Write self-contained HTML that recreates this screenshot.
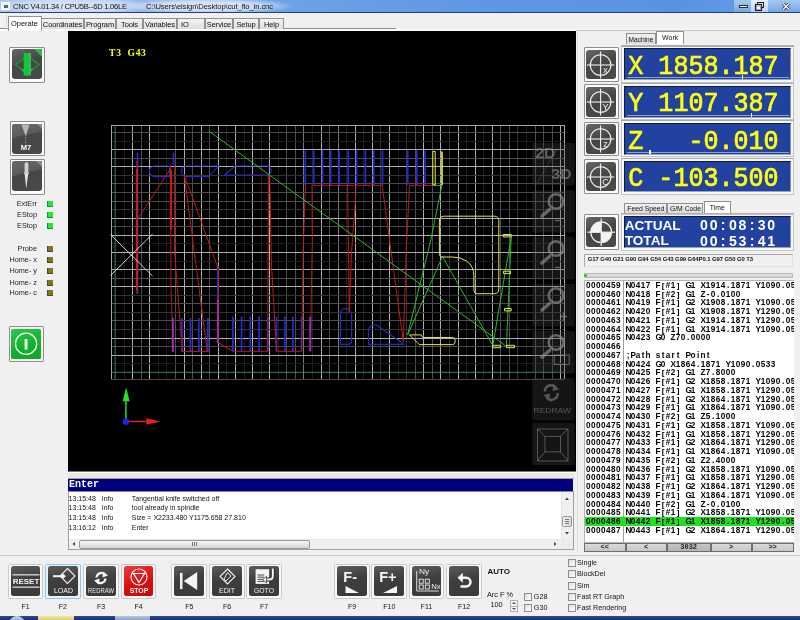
<!DOCTYPE html>
<html><head><meta charset="utf-8">
<style>
*{margin:0;padding:0;box-sizing:border-box}
html,body{width:800px;height:620px;overflow:hidden;will-change:transform;background:#f0f0f0;font-family:"Liberation Sans",sans-serif;color:#000}
.a{position:absolute}
#title{left:0;top:0;width:800px;height:13px;background:linear-gradient(90deg,#b2c8ec 0%,#a4bfea 12%,#8cb2e8 22%,#6ea2e6 36%,#5e97e4 60%,#5893e2 85%,#6aa0e6 100%);border-bottom:1px solid #27406e;overflow:hidden}
.tt{font-size:7.6px;line-height:13px;white-space:nowrap;color:#111;letter-spacing:-0.25px}
.tab{top:17.5px;height:11px;border:1px solid #8e9296;border-bottom:none;background:linear-gradient(#f4f4f4,#dedede);font-size:7.5px;line-height:11px;letter-spacing:-0.1px;text-align:center;white-space:nowrap;color:#111}
.btnf{border:1px solid #8d8d8d;background:#fbfbfb;border-radius:1px}
.btni{border-radius:3px;background:linear-gradient(160deg,#686868,#464646 45%,#4a4a4a 100%)}
.led{width:6px;height:6px}
.lbl{font-size:7.3px;text-align:right;width:37px;left:0;white-space:nowrap;color:#222}
.dro{left:624px;width:167px;height:32px;background:#2242a0;border:1px solid #0d1a3a;border-right-color:#8090b0;border-bottom-color:#9aa6c0}
.drot{font-family:"Liberation Mono",monospace;font-size:25.05px;color:#ffff10;left:3.3px;top:0px;line-height:30px;white-space:pre;margin-top:0.8px;transform:scaleY(1.12);transform-origin:0 0;-webkit-text-stroke:0.65px #ffff10}
.prog{font-family:"Liberation Sans",sans-serif;font-weight:bold;font-size:8.2px;line-height:8.75px;white-space:nowrap;color:#000}.prog i{display:inline-block;width:5px;text-align:center;font-style:normal}.prog .b{transform:scaleY(0.86)}
.fl{font-size:7px;color:#111;text-align:center;width:30px;top:603px}
.cb{width:8px;height:8px;border:1px solid #8e8f8f;background:linear-gradient(135deg,#dcdcdc,#fff)}
.cbl{font-size:7.2px;white-space:nowrap;color:#111}
</style></head>
<body>
<!-- Title bar -->
<div id="title" class="a">
  <div class="a" style="left:0px;top:-3px;width:150px;height:18px;background:radial-gradient(ellipse at center,rgba(255,255,255,.6) 0%,rgba(255,255,255,.4) 50%,rgba(255,255,255,0) 72%)"></div><div class="a" style="left:128px;top:-2px;width:165px;height:16px;background:radial-gradient(ellipse at center,rgba(255,255,255,.8) 0%,rgba(255,255,255,.55) 45%,rgba(255,255,255,0) 72%)"></div>
  <div class="a" style="left:1px;top:2px;width:9px;height:8px;background:#e8eef6;border:1px solid #fff"><div class="a" style="left:1.5px;top:1.5px;width:4px;height:3px;background:#3a7a5a"></div></div>
  <div class="a tt" style="left:13px;top:0">CNC V4.01.34 / CPU5B--6D 1.06LE</div>
  <div class="a tt" style="left:146px;top:0;letter-spacing:-0.08px">C:\Users\elsign\Desktop\cut_flo_in.cnc</div>
  <div class="a" style="left:734px;top:0;width:66px;height:12px;background:linear-gradient(#a8c8f0,#74a8ea)"></div>
  <div class="a" style="left:751px;top:0;width:17px;height:12px;background:linear-gradient(#e8f0fb,#b8d2f4)"></div>
  <div class="a" style="left:739px;top:4.5px;width:9px;height:3.5px;background:#fff;border:1px solid #2a2a2a"></div>
  <svg class="a" style="left:754px;top:1px" width="12" height="11"><rect x="3.5" y="1.5" width="6" height="5" fill="none" stroke="#222" stroke-width="1"/><rect x="1.5" y="3.5" width="6" height="6" fill="#fff" stroke="#222" stroke-width="1.2"/><rect x="2.5" y="5" width="4" height="3.5" fill="#fff" stroke="#666" stroke-width="0.6"/></svg>
  <svg class="a" style="left:779px;top:1px" width="14" height="11"><path d="M4,2.5L10,8.5M10,2.5L4,8.5" stroke="#333" stroke-width="2.8"/><path d="M4,2.5L10,8.5M10,2.5L4,8.5" stroke="#fff" stroke-width="1.3"/></svg>
</div>
<!-- Tab strip -->
<div class="a" style="left:0;top:29.2px;width:800px;height:1.8px;background:#fafafa"></div><div class="a" style="left:0;top:28px;width:396px;height:1.2px;background:#8c8c8c"></div>
<div class="a" style="left:6px;top:15px;width:1px;height:15px;background:#d8d8d8"></div>
<div class="a" style="left:7.5px;top:15.5px;width:34px;height:15px;background:#fff;border:1px solid #8e9296;border-bottom:none;font-size:7.5px;line-height:14px;text-align:center;color:#111">Operate</div>
<div class="a tab" style="left:41px;width:43px">Coordinates</div>
<div class="a tab" style="left:84px;width:32px">Program</div>
<div class="a tab" style="left:116px;width:27px">Tools</div>
<div class="a tab" style="left:143px;width:34px">Variables</div>
<div class="a tab" style="left:177px;width:28px;text-align:left;padding-left:3px">IO</div>
<div class="a tab" style="left:205px;width:28px">Service</div>
<div class="a tab" style="left:233px;width:26px">Setup</div>
<div class="a tab" style="left:259px;width:25px">Help</div>

<!-- LEFT PANEL -->
<div id="left">
<div class="a btnf" style="left:9px;top:47px;width:36px;height:35.5px"></div>
<div class="a btni" style="left:12px;top:49px;width:30px;height:30px"></div>
<svg class="a" style="left:12px;top:49px" width="30" height="30" viewBox="0 0 30 30">
  <polygon points="22,0 30,0 30,8" fill="#22c040"/>
  <polygon points="15,6.5 27,15.5 15,24.5 3.5,15.5" fill="none" stroke="#1a9a38" stroke-width="1.9" opacity="0.75"/>
  <rect x="11.7" y="4" width="7.3" height="22.5" fill="#11c938"/>
  <polygon points="9,20 21.5,20 15,27" fill="#11c938"/>
  <line x1="18" y1="4" x2="18" y2="25" stroke="#b080c0" stroke-width="0.7"/>
</svg>
<div class="a btnf" style="left:9.5px;top:121px;width:35px;height:35px"></div>
<div class="a btni" style="left:12px;top:123.5px;width:30px;height:30px"></div>
<svg class="a" style="left:12px;top:123.5px" width="30" height="30" viewBox="0 0 30 30">
  <path d="M1.5,0 H28.5 Q30,0 30,1.5 V8 Q18,9 0,14 V1.5 Q0,0 1.5,0Z" fill="#6a6a6a" opacity="0.55"/>
  <polygon points="9.5,0.5 17.5,0.5 13.8,12.5" fill="#b8c8d8" opacity="0.85"/>
  <path d="M13.6,13v6" stroke="#8a9ab0" stroke-width="1" stroke-dasharray="1.2 1.2"/>
  <polygon points="25,0 30,0 30,5" fill="#8a8a8a"/>
  <text x="14" y="26" font-family="Liberation Sans" font-weight="bold" font-size="7.6" fill="#fff" text-anchor="middle">M7</text>
</svg>
<div class="a btnf" style="left:9.5px;top:159px;width:35px;height:35.5px"></div>
<div class="a btni" style="left:12px;top:161px;width:30px;height:30px"></div>
<svg class="a" style="left:12px;top:161px" width="30" height="30" viewBox="0 0 30 30">
  <path d="M1.5,0 H28.5 Q30,0 30,1.5 V8.5 Q18,10 0,15.5 V1.5 Q0,0 1.5,0Z" fill="#6a6a6a" opacity="0.55"/>
  <polygon points="24,0 30,0 30,6" fill="#8a8a8a"/>
  <rect x="12.6" y="1.3" width="3.8" height="10.5" rx="1.6" fill="#d0d0d0"/>
  <rect x="12" y="11.5" width="5" height="1.3" fill="#f0f0f0"/>
  <polygon points="12.6,12.8 16.2,12.8 14.3,27.5" fill="#e4e4e4"/>
</svg>
<div class="a lbl" style="top:199.3px;line-height:10px">ExtErr</div><div class="a led" style="left:47px;top:201.3px;background:#22e83a;box-shadow:inset 1px -1px 0 #0b9a1b"></div>
<div class="a lbl" style="top:210.3px;line-height:10px">EStop</div><div class="a led" style="left:47px;top:212.3px;background:#22e83a;box-shadow:inset 1px -1px 0 #0b9a1b"></div>
<div class="a lbl" style="top:221.4px;line-height:10px">EStop</div><div class="a led" style="left:47px;top:223.4px;background:#22e83a;box-shadow:inset 1px -1px 0 #0b9a1b"></div>
<div class="a lbl" style="top:244.2px;line-height:10px">Probe</div><div class="a led" style="left:47px;top:246.2px;background:#807624;box-shadow:inset 1px -1px 0 #4f4a18"></div>
<div class="a lbl" style="top:255.3px;line-height:10px">Home- x</div><div class="a led" style="left:47px;top:257.3px;background:#807624;box-shadow:inset 1px -1px 0 #4f4a18"></div>
<div class="a lbl" style="top:266.3px;line-height:10px">Home- y</div><div class="a led" style="left:47px;top:268.3px;background:#807624;box-shadow:inset 1px -1px 0 #4f4a18"></div>
<div class="a lbl" style="top:277.6px;line-height:10px">Home- z</div><div class="a led" style="left:47px;top:279.6px;background:#807624;box-shadow:inset 1px -1px 0 #4f4a18"></div>
<div class="a lbl" style="top:288.3px;line-height:10px">Home- c</div><div class="a led" style="left:47px;top:290.3px;background:#807624;box-shadow:inset 1px -1px 0 #4f4a18"></div>

<div class="a btnf" style="left:8.5px;top:326px;width:35px;height:35.5px"></div>
<div class="a" style="left:10.6px;top:328.6px;width:30.2px;height:30.4px;background:linear-gradient(160deg,#2dc84a,#10b02a 60%,#12a82a);border-radius:1.5px"></div>
<svg class="a" style="left:10.6px;top:328.6px" width="31" height="31" viewBox="0 0 31 31">
  <circle cx="15.1" cy="14.8" r="10.6" fill="none" stroke="#f4fff4" stroke-width="1.3"/>
  <rect x="13.6" y="10" width="2.9" height="10.6" fill="#f4fff4"/>
</svg>
</div>

<!-- GRAPHIC -->
<div id="gfx"><svg class="a" style="left:67.5px;top:31px" width="508.5" height="440.5" viewBox="67.5 31 508.5 440.5">
<rect x="67.5" y="31" width="508.5" height="440.5" fill="#000"/>
<path d="M123.5,125.3V379.2" stroke="#1e1e1e" stroke-width="1" shape-rendering="crispEdges"/>
<path d="M131.5,125.3V379.2" stroke="#aeaeae" stroke-width="1" shape-rendering="crispEdges"/>
<path d="M140.5,125.3V379.2" stroke="#4d4d4d" stroke-width="1" shape-rendering="crispEdges"/>
<path d="M148.5,125.3V379.2" stroke="#aeaeae" stroke-width="1" shape-rendering="crispEdges"/>
<path d="M157.5,125.3V379.2" stroke="#1e1e1e" stroke-width="1" shape-rendering="crispEdges"/>
<path d="M165.5,125.3V379.2" stroke="#1e1e1e" stroke-width="1" shape-rendering="crispEdges"/>
<path d="M174.5,125.3V379.2" stroke="#4d4d4d" stroke-width="1" shape-rendering="crispEdges"/>
<path d="M183.5,125.3V379.2" stroke="#aeaeae" stroke-width="1" shape-rendering="crispEdges"/>
<path d="M191.5,125.3V379.2" stroke="#4d4d4d" stroke-width="1" shape-rendering="crispEdges"/>
<path d="M200.5,125.3V379.2" stroke="#aeaeae" stroke-width="1" shape-rendering="crispEdges"/>
<path d="M208.5,125.3V379.2" stroke="#4d4d4d" stroke-width="1" shape-rendering="crispEdges"/>
<path d="M217.5,125.3V379.2" stroke="#aeaeae" stroke-width="1" shape-rendering="crispEdges"/>
<path d="M225.5,125.3V379.2" stroke="#1e1e1e" stroke-width="1" shape-rendering="crispEdges"/>
<path d="M234.5,125.3V379.2" stroke="#aeaeae" stroke-width="1" shape-rendering="crispEdges"/>
<path d="M243.5,125.3V379.2" stroke="#1e1e1e" stroke-width="1" shape-rendering="crispEdges"/>
<path d="M251.5,125.3V379.2" stroke="#aeaeae" stroke-width="1" shape-rendering="crispEdges"/>
<path d="M260.5,125.3V379.2" stroke="#1e1e1e" stroke-width="1" shape-rendering="crispEdges"/>
<path d="M268.5,125.3V379.2" stroke="#aeaeae" stroke-width="1" shape-rendering="crispEdges"/>
<path d="M277.5,125.3V379.2" stroke="#1e1e1e" stroke-width="1" shape-rendering="crispEdges"/>
<path d="M285.5,125.3V379.2" stroke="#4d4d4d" stroke-width="1" shape-rendering="crispEdges"/>
<path d="M294.5,125.3V379.2" stroke="#4d4d4d" stroke-width="1" shape-rendering="crispEdges"/>
<path d="M302.5,125.3V379.2" stroke="#777777" stroke-width="1" shape-rendering="crispEdges"/>
<path d="M311.5,125.3V379.2" stroke="#1e1e1e" stroke-width="1" shape-rendering="crispEdges"/>
<path d="M320.5,125.3V379.2" stroke="#aeaeae" stroke-width="1" shape-rendering="crispEdges"/>
<path d="M328.5,125.3V379.2" stroke="#4d4d4d" stroke-width="1" shape-rendering="crispEdges"/>
<path d="M337.5,125.3V379.2" stroke="#777777" stroke-width="1" shape-rendering="crispEdges"/>
<path d="M345.5,125.3V379.2" stroke="#1e1e1e" stroke-width="1" shape-rendering="crispEdges"/>
<path d="M354.5,125.3V379.2" stroke="#aeaeae" stroke-width="1" shape-rendering="crispEdges"/>
<path d="M362.5,125.3V379.2" stroke="#1e1e1e" stroke-width="1" shape-rendering="crispEdges"/>
<path d="M371.5,125.3V379.2" stroke="#aeaeae" stroke-width="1" shape-rendering="crispEdges"/>
<path d="M379.5,125.3V379.2" stroke="#333333" stroke-width="1" shape-rendering="crispEdges"/>
<path d="M388.5,125.3V379.2" stroke="#aeaeae" stroke-width="1" shape-rendering="crispEdges"/>
<path d="M397.5,125.3V379.2" stroke="#1e1e1e" stroke-width="1" shape-rendering="crispEdges"/>
<path d="M405.5,125.3V379.2" stroke="#333333" stroke-width="1" shape-rendering="crispEdges"/>
<path d="M414.5,125.3V379.2" stroke="#4d4d4d" stroke-width="1" shape-rendering="crispEdges"/>
<path d="M422.5,125.3V379.2" stroke="#aeaeae" stroke-width="1" shape-rendering="crispEdges"/>
<path d="M431.5,125.3V379.2" stroke="#4d4d4d" stroke-width="1" shape-rendering="crispEdges"/>
<path d="M439.5,125.3V379.2" stroke="#aeaeae" stroke-width="1" shape-rendering="crispEdges"/>
<path d="M448.5,125.3V379.2" stroke="#333333" stroke-width="1" shape-rendering="crispEdges"/>
<path d="M457.5,125.3V379.2" stroke="#aeaeae" stroke-width="1" shape-rendering="crispEdges"/>
<path d="M465.5,125.3V379.2" stroke="#1e1e1e" stroke-width="1" shape-rendering="crispEdges"/>
<path d="M474.5,125.3V379.2" stroke="#aeaeae" stroke-width="1" shape-rendering="crispEdges"/>
<path d="M482.5,125.3V379.2" stroke="#1e1e1e" stroke-width="1" shape-rendering="crispEdges"/>
<path d="M491.5,125.3V379.2" stroke="#aeaeae" stroke-width="1" shape-rendering="crispEdges"/>
<path d="M499.5,125.3V379.2" stroke="#4d4d4d" stroke-width="1" shape-rendering="crispEdges"/>
<path d="M508.5,125.3V379.2" stroke="#4d4d4d" stroke-width="1" shape-rendering="crispEdges"/>
<path d="M516.5,125.3V379.2" stroke="#333333" stroke-width="1" shape-rendering="crispEdges"/>
<path d="M525.5,125.3V379.2" stroke="#1e1e1e" stroke-width="1" shape-rendering="crispEdges"/>
<path d="M534.5,125.3V379.2" stroke="#4d4d4d" stroke-width="1" shape-rendering="crispEdges"/>
<path d="M542.5,125.3V379.2" stroke="#4d4d4d" stroke-width="1" shape-rendering="crispEdges"/>
<path d="M551.5,125.3V379.2" stroke="#4d4d4d" stroke-width="1" shape-rendering="crispEdges"/>
<path d="M559.5,125.3V379.2" stroke="#aeaeae" stroke-width="1" shape-rendering="crispEdges"/>
<path d="M110.5,363.5H563.5" stroke="#1e1e1e" stroke-width="1" shape-rendering="crispEdges"/>
<path d="M110.5,355.5H563.5" stroke="#aeaeae" stroke-width="1" shape-rendering="crispEdges"/>
<path d="M110.5,346.5H563.5" stroke="#4d4d4d" stroke-width="1" shape-rendering="crispEdges"/>
<path d="M110.5,338.5H563.5" stroke="#aeaeae" stroke-width="1" shape-rendering="crispEdges"/>
<path d="M110.5,329.5H563.5" stroke="#333333" stroke-width="1" shape-rendering="crispEdges"/>
<path d="M110.5,320.5H563.5" stroke="#4d4d4d" stroke-width="1" shape-rendering="crispEdges"/>
<path d="M110.5,312.5H563.5" stroke="#333333" stroke-width="1" shape-rendering="crispEdges"/>
<path d="M110.5,303.5H563.5" stroke="#4d4d4d" stroke-width="1" shape-rendering="crispEdges"/>
<path d="M110.5,295.5H563.5" stroke="#333333" stroke-width="1" shape-rendering="crispEdges"/>
<path d="M110.5,286.5H563.5" stroke="#aeaeae" stroke-width="1" shape-rendering="crispEdges"/>
<path d="M110.5,278.5H563.5" stroke="#4d4d4d" stroke-width="1" shape-rendering="crispEdges"/>
<path d="M110.5,269.5H563.5" stroke="#aeaeae" stroke-width="1" shape-rendering="crispEdges"/>
<path d="M110.5,261.5H563.5" stroke="#1e1e1e" stroke-width="1" shape-rendering="crispEdges"/>
<path d="M110.5,252.5H563.5" stroke="#aeaeae" stroke-width="1" shape-rendering="crispEdges"/>
<path d="M110.5,243.5H563.5" stroke="#1e1e1e" stroke-width="1" shape-rendering="crispEdges"/>
<path d="M110.5,235.5H563.5" stroke="#aeaeae" stroke-width="1" shape-rendering="crispEdges"/>
<path d="M110.5,226.5H563.5" stroke="#4d4d4d" stroke-width="1" shape-rendering="crispEdges"/>
<path d="M110.5,218.5H563.5" stroke="#aeaeae" stroke-width="1" shape-rendering="crispEdges"/>
<path d="M110.5,209.5H563.5" stroke="#333333" stroke-width="1" shape-rendering="crispEdges"/>
<path d="M110.5,201.5H563.5" stroke="#4d4d4d" stroke-width="1" shape-rendering="crispEdges"/>
<path d="M110.5,192.5H563.5" stroke="#4d4d4d" stroke-width="1" shape-rendering="crispEdges"/>
<path d="M110.5,183.5H563.5" stroke="#4d4d4d" stroke-width="1" shape-rendering="crispEdges"/>
<path d="M110.5,175.5H563.5" stroke="#333333" stroke-width="1" shape-rendering="crispEdges"/>
<path d="M110.5,166.5H563.5" stroke="#aeaeae" stroke-width="1" shape-rendering="crispEdges"/>
<path d="M110.5,158.5H563.5" stroke="#4d4d4d" stroke-width="1" shape-rendering="crispEdges"/>
<path d="M110.5,149.5H563.5" stroke="#aeaeae" stroke-width="1" shape-rendering="crispEdges"/>
<path d="M110.5,141.5H563.5" stroke="#1e1e1e" stroke-width="1" shape-rendering="crispEdges"/>
<path d="M110.5,132.5H563.5" stroke="#4d4d4d" stroke-width="1" shape-rendering="crispEdges"/>
<path d="M110.5,125.5H563.5M110.5,125.3V379.2M563.5,125.3V379.2" stroke="#a7a7a7" stroke-width="1" fill="none" shape-rendering="crispEdges"/>
<path d="M110.5,379.5H563.5" stroke="#484848" stroke-width="1" fill="none" shape-rendering="crispEdges"/>
<path d="M114.6,125.3V379.2M110.5,372.3H563.5" stroke="#2e9474" stroke-width="0.9" fill="none"/>
<path d="M137,152.4V294M173,152.4V165M304.8,150.4V185M313.2,150.4V185M322,150.4V185M330.2,150.4V185M338.6,150.4V185M347.7,150.4V185M356,150.4V185M364.9,150.4V185M373.2,150.4V185M382,150.4V185M407.2,150.4V185M416.3,150.4V185M424.6,150.4V185M172.3,318V352M181.4,318V352M190,318V352M198.3,318V352M207.4,318V352M232.4,316.4V351.3M241.1,316.4V351.3M249.8,316.4V351.3M258.5,316.4V351.3M267.3,316.4V351.3M276,316.4V351.3M284.3,316.4V351.3M292.4,316.4V351.3M301.1,316.4V351.3M309.8,316.4V351.3M217.3,266V343" stroke="#2828dc" stroke-width="1.7" fill="none"/>
<path d="M154,166H169V176.6H154A5.3,5.3 0 0 1 154,166ZM186,166H218L208,176.6H186A5.3,5.3 0 0 1 186,166ZM235,166H266.5A4.5,4.5 0 0 1 266.5,175H224Z" stroke="#2828c8" stroke-width="1.05" fill="none" stroke-linejoin="round"/>
<path d="M340,344.4V313A4.3,4.3 0 0 1 344.3,308.7H347L351,313V341A3.4,3.4 0 0 1 347.6,344.4Z M368,344.4V330A5,5 0 0 1 373,325H376L403.8,344.4Z" stroke="#2626c0" stroke-width="1.2" fill="none" stroke-linejoin="round"/>
<path d="M136.5,161V294M169,170.3L137.5,218.6M170,165L170.5,288.6L172.8,350.7M174.2,165L174,250L181.8,351.4H207.8M183.7,174.5L206.7,351M183.7,174.5L218,269.4V342.8L232.4,351.3H267.3M267.9,175L267.3,351.3M269.2,176L271,265L276,351.3H301.1M305,185L303,240L301.1,351.3M311.5,185L311.8,240L309.8,351.3M313,185.4H381.6M409,185.4H432M347,185L348,250L348.7,312.5M355.4,185L355,200L351.2,250L348.7,312.5M381.6,185L402.8,341.5M409,185L405.8,250L402.8,341.5" stroke="#c41a1a" stroke-width="0.95" fill="none" stroke-linejoin="round"/>
<path d="M136.5,169V290M170.5,170V230" stroke="#d81a1a" stroke-width="1.8" fill="none"/>
<path d="M172.3,318V352M217.3,300V343M309.8,317V351.3" stroke="#a82aa8" stroke-width="1.8" fill="none"/>
<path d="M208.2,131L506,346.5 M441.4,185L430.3,240L407.1,334.9 M442,256.5L407.1,334.9 M442,256.5L492.3,345.5 M510.7,237L492.3,345.5 M510.7,237L505.9,346.5 M433,185.4H441.4" stroke="#2cc02c" stroke-width="0.95" fill="none"/>
<path d="M432.3,151.5V185H434.7V151.5ZM438.9,221Q438.9,216.2 443.7,216.2H494Q498.3,216.2 498.3,220.5V289Q498.3,293.7 494,293.7H477Q473.4,293.7 473.4,290V276Q473.4,266 466,261Q460,257 452,257H441.4Q438.9,256.5 438.9,254.7ZM409,334.9H420.7L422,337.5H452Q454.6,337.5 454.6,340V342Q454.6,344.6 452,344.6H418.7ZM502.7,234.5H510.7V236.89999999999998H502.7ZM503,271.2H510V273.59999999999997H503ZM504,308.5H510.7V310.9H504ZM492,345.3H500V347.7H492ZM506,345.3H514V347.7H506Z" stroke="#e4e44a" stroke-width="1" fill="none"/>
<path d="M441.5,151.5V185" stroke="#f0f040" stroke-width="1.6" fill="none"/>
<path d="M110,234.5L152,276M110,275.5L152,234" stroke="#e8e8e8" stroke-width="0.9" fill="none"/>
<text x="108.6" y="56.3" font-family="Liberation Serif" font-weight="bold" font-size="9.6" fill="#ffff20" textLength="36.8" lengthAdjust="spacing" xml:space="preserve">T3  G43</text>
<path d="M125.4,421.7V400" stroke="#22e822" stroke-width="1.5"/><polygon points="125.6,387.5 122.2,401.3 129.2,401.3" fill="#22e822"/>
<path d="M125.4,421.5H146" stroke="#ee1c1c" stroke-width="1.5"/><polygon points="160,421.5 145.8,418.2 145.8,424.8" fill="#ee1c1c"/>
<circle cx="125.4" cy="421.7" r="3.3" fill="#2020f0"/>
<rect x="531.7" y="143" width="42.5" height="42.5" rx="2" fill="#444" opacity="0.3"/>
<rect x="531.7" y="190" width="42.5" height="42.5" rx="2" fill="#444" opacity="0.3"/>
<rect x="531.7" y="237" width="42.5" height="42.5" rx="2" fill="#444" opacity="0.3"/>
<rect x="531.7" y="284" width="42.5" height="42.5" rx="2" fill="#444" opacity="0.3"/>
<rect x="531.7" y="331" width="42.5" height="42.5" rx="2" fill="#444" opacity="0.3"/>
<rect x="531.7" y="378" width="42.5" height="42.5" rx="2" fill="#444" opacity="0.3"/>
<rect x="531.7" y="422.6" width="42.5" height="42.5" rx="2" fill="#444" opacity="0.3"/>
<g opacity="0.62"><text x="534.8" y="157.8" font-family="Liberation Sans" font-weight="bold" font-size="15.5" fill="#8c8c8c" textLength="20" lengthAdjust="spacingAndGlyphs">2D</text>
<text x="551" y="179.3" font-family="Liberation Sans" font-weight="bold" font-size="15.5" fill="#8c8c8c" textLength="20" lengthAdjust="spacingAndGlyphs">3D</text>
<path d="M557,148L537,183" stroke="#8c8c8c" stroke-width="1" opacity="0.45"/></g>
<g opacity="0.68"><circle cx="555.5" cy="201.5" r="7.3" fill="none" stroke="#8c8c8c" stroke-width="2.6"/>
<path d="M549.0,209.5L541.5,216.0" stroke="#8c8c8c" stroke-width="3.6" stroke-linecap="round"/>
<path d="M554.5,220.5h5" stroke="#8c8c8c" stroke-width="1.3"/>
</g>
<g opacity="0.68"><circle cx="555.5" cy="248.5" r="7.3" fill="none" stroke="#8c8c8c" stroke-width="2.6"/>
<path d="M549.0,256.5L541.5,263.0" stroke="#8c8c8c" stroke-width="3.6" stroke-linecap="round"/>
<path d="M554.5,267.5h5" stroke="#8c8c8c" stroke-width="1.3"/>
</g>
<g opacity="0.68"><circle cx="555.5" cy="295.5" r="7.3" fill="none" stroke="#8c8c8c" stroke-width="2.6"/>
<path d="M549.0,303.5L541.5,310.0" stroke="#8c8c8c" stroke-width="3.6" stroke-linecap="round"/>
<path d="M559.5,316.5h7M563.0,313.0v7" stroke="#8c8c8c" stroke-width="1.3"/>
</g>
<g opacity="0.68"><circle cx="555.5" cy="342.5" r="7.3" fill="none" stroke="#8c8c8c" stroke-width="2.6"/>
<path d="M549.0,350.5L541.5,357.0" stroke="#8c8c8c" stroke-width="3.6" stroke-linecap="round"/>
<rect x="553.7" y="355" width="15" height="9.5" fill="none" stroke="#8c8c8c" stroke-width="1"/>
</g>
<g opacity="0.55"><path d="M544.5,391.5 A6,6 0 0 1 555.5,388" stroke="#8c8c8c" stroke-width="2.6" fill="none"/><polygon points="553,384 558.5,389.5 552,391" fill="#8c8c8c"/>
<path d="M557,393 A6,6 0 0 1 546,397" stroke="#8c8c8c" stroke-width="2.6" fill="none"/><polygon points="548.5,400.5 543,395 549.5,393.5" fill="#8c8c8c"/>
<text x="533" y="413.3" font-family="Liberation Sans" font-size="8" fill="#8c8c8c" textLength="37.5" lengthAdjust="spacingAndGlyphs">REDRAW</text></g>
<path d="M537,429h30.5v32h-30.5zM544.5,436.4h15.5v15.4h-15.5zM537,429l7.5,7.4M567.5,429l-7.5,7.4M537,461l7.5,-9.2M567.5,461l-7.5,-9.2" stroke="#8c8c8c" stroke-width="1" fill="none" opacity="0.55"/>
</svg></div>

<!-- LOG -->
<div class="a" style="left:67.5px;top:471.5px;width:508.5px;height:1.5px;background:#fff"></div>
<div class="a" style="left:67.5px;top:473px;width:506px;height:4.5px;background:#ebe8dc"></div>
<div class="a" style="left:67.5px;top:477.5px;width:506px;height:1px;background:#a0a0a0"></div>
<div class="a" style="left:67.8px;top:478.5px;width:505.5px;height:12px;background:#000080"></div>
<div class="a" style="left:69px;top:478.5px;font-family:'Liberation Mono',monospace;font-weight:bold;font-size:10px;line-height:12px;color:#fff">Enter</div>

<div class="a" style="left:67.8px;top:491px;width:506px;height:59px;border:1px solid #a0a0a0;border-top-color:#828790;background:#fff"></div>
<div class="a" style="left:68.6px;top:493.5px;font-size:7px;line-height:10px;white-space:nowrap;color:#111">13:15:48</div>
<div class="a" style="left:101.8px;top:493.5px;font-size:7px;line-height:10px;white-space:nowrap;color:#111">Info</div>
<div class="a" style="left:131.8px;top:493.5px;font-size:7px;line-height:10px;white-space:nowrap;color:#111">Tangential knife switched off</div>
<div class="a" style="left:68.6px;top:503.3px;font-size:7px;line-height:10px;white-space:nowrap;color:#111">13:15:48</div>
<div class="a" style="left:101.8px;top:503.3px;font-size:7px;line-height:10px;white-space:nowrap;color:#111">Info</div>
<div class="a" style="left:131.8px;top:503.3px;font-size:7px;line-height:10px;white-space:nowrap;color:#111">tool already in spindle</div>
<div class="a" style="left:68.6px;top:513.1px;font-size:7px;line-height:10px;white-space:nowrap;color:#111">13:15:48</div>
<div class="a" style="left:101.8px;top:513.1px;font-size:7px;line-height:10px;white-space:nowrap;color:#111">Info</div>
<div class="a" style="left:131.8px;top:513.1px;font-size:7px;line-height:10px;white-space:nowrap;color:#111">Size = X2233.480 Y1175.658 27.810</div>
<div class="a" style="left:68.6px;top:522.9px;font-size:7px;line-height:10px;white-space:nowrap;color:#111">13:16:12</div>
<div class="a" style="left:101.8px;top:522.9px;font-size:7px;line-height:10px;white-space:nowrap;color:#111">Info</div>
<div class="a" style="left:131.8px;top:522.9px;font-size:7px;line-height:10px;white-space:nowrap;color:#111">Enter</div>
<div class="a" style="left:561px;top:492px;width:12px;height:47px;background:#f0f0f0;border-left:1px solid #e6e6e6"></div>
<svg class="a" style="left:561px;top:492px" width="12" height="47"><polygon points="4,8 6,5.5 8,8" fill="#444"/><polygon points="4,40 6,42.5 8,40" fill="#444"/></svg>
<div class="a" style="left:562px;top:515.5px;width:10px;height:11.5px;border:1px solid #999;border-radius:2px;background:linear-gradient(90deg,#f4f4f4,#d8d8d8)"></div>
<div class="a" style="left:565px;top:519px;width:4px;height:4.5px;border-top:1px solid #777;border-bottom:1px solid #777"></div><div class="a" style="left:565px;top:521px;width:4px;height:1px;background:#777"></div>
<div class="a" style="left:68.8px;top:539px;width:492px;height:10px;background:#f0f0f0;border-top:1px solid #e6e6e6"></div><div class="a" style="left:561px;top:539px;width:12px;height:10px;background:#ececec"></div>
<svg class="a" style="left:68.8px;top:539px" width="492" height="10"><polygon points="6,5 3.5,3 3.5,7" fill="#444" transform="rotate(180 4.75 5)"/><polygon points="485,3 487.5,5 485,7" fill="#444"/></svg>
<div class="a" style="left:79.3px;top:539.5px;width:231px;height:9px;border:1px solid #999;border-radius:2px;background:linear-gradient(#f6f6f6,#d6d6d6)"></div>
<div class="a" style="left:192px;top:541.5px;width:5px;height:4px;border-left:1px solid #777;border-right:1px solid #777"></div><div class="a" style="left:194px;top:541.5px;width:1px;height:4px;background:#777"></div>
<!-- RIGHT PANEL -->
<div id="right"><div class="a" style="left:576.5px;top:30.5px;width:1px;height:521px;background:#dcdcdc"></div><div class="a" style="left:576px;top:30.3px;width:224px;height:1px;background:#c4c4c4"></div>
<div class="a" style="left:625.7px;top:32.6px;width:30.5px;height:11.5px;border:1px solid #8e9296;border-bottom:none;background:linear-gradient(#f2f2f2,#d9d9d9);font-size:6.6px;line-height:11px;text-align:center;color:#111">Machine</div>
<div class="a" style="left:656px;top:31.4px;width:28.3px;height:13px;border:1px solid #8e9296;border-bottom:none;background:#fff;font-size:7px;line-height:11px;text-align:center;color:#111">Work</div>
<div class="a" style="left:621px;top:44.5px;width:173px;height:1px;background:#b0b0b0"></div>
<div class="a btnf" style="left:583.5px;top:47.2px;width:35px;height:34.8px"></div>
<div class="a btni" style="left:585.8px;top:49.7px;width:30.4px;height:29.8px"></div>
<svg class="a" style="left:585px;top:49.6px" width="32" height="30" viewBox="0 0 32 30">
<circle cx="15.6" cy="15" r="10.3" fill="none" stroke="#f2f2f2" stroke-width="1.1"/>
<line x1="1.8" y1="15" x2="29.2" y2="15" stroke="#f2f2f2" stroke-width="1.1"/>
<line x1="15.6" y1="1.6" x2="15.6" y2="28.4" stroke="#f2f2f2" stroke-width="1.1"/>
<text x="20.5" y="22.8" font-family="Liberation Sans" font-size="9" fill="#f0f0f0" text-anchor="middle">x</text>
</svg>
<div class="a" style="left:621px;top:45.7px;width:173px;height:37.3px;border:1px solid #c4c4c4;border-top-color:#a8a8a8;background:#f7f7f7"></div>
<div class="a dro" style="top:48.4px;height:32.1px"><div class="a drot">X 1858.187</div><div class="a" style="left:2px;top:27.6px;width:162px;height:1px;background:#8ea0cc"></div><div class="a" style="left:116.6px;top:25.6px;width:1.5px;height:4px;background:#fff"></div></div>
<div class="a btnf" style="left:583.5px;top:84.3px;width:35px;height:35.2px"></div>
<div class="a btni" style="left:585.8px;top:86.8px;width:30.4px;height:30.2px"></div>
<svg class="a" style="left:585px;top:86.9px" width="32" height="30" viewBox="0 0 32 30">
<circle cx="15.6" cy="15" r="10.3" fill="none" stroke="#f2f2f2" stroke-width="1.1"/>
<line x1="1.8" y1="15" x2="29.2" y2="15" stroke="#f2f2f2" stroke-width="1.1"/>
<line x1="15.6" y1="1.6" x2="15.6" y2="28.4" stroke="#f2f2f2" stroke-width="1.1"/>
<text x="20.5" y="22.8" font-family="Liberation Sans" font-size="9" fill="#f0f0f0" text-anchor="middle">Y</text>
</svg>
<div class="a" style="left:621px;top:82.8px;width:173px;height:37.7px;border:1px solid #c4c4c4;border-top-color:#a8a8a8;background:#f7f7f7"></div>
<div class="a dro" style="top:85.5px;height:32.5px"><div class="a drot">Y 1107.387</div><div class="a" style="left:2px;top:28.0px;width:162px;height:1px;background:#8ea0cc"></div><div class="a" style="left:125.6px;top:26.0px;width:1.5px;height:4px;background:#fff"></div></div>
<div class="a btnf" style="left:583.5px;top:121.8px;width:35px;height:34.7px"></div>
<div class="a btni" style="left:585.8px;top:124.3px;width:30.4px;height:29.7px"></div>
<svg class="a" style="left:585px;top:124.2px" width="32" height="30" viewBox="0 0 32 30">
<circle cx="15.6" cy="15" r="10.3" fill="none" stroke="#f2f2f2" stroke-width="1.1"/>
<line x1="1.8" y1="15" x2="29.2" y2="15" stroke="#f2f2f2" stroke-width="1.1"/>
<line x1="15.6" y1="1.6" x2="15.6" y2="28.4" stroke="#f2f2f2" stroke-width="1.1"/>
<text x="20.5" y="22.8" font-family="Liberation Sans" font-size="9" fill="#f0f0f0" text-anchor="middle">z</text>
</svg>
<div class="a" style="left:621px;top:120.3px;width:173px;height:37.2px;border:1px solid #c4c4c4;border-top-color:#a8a8a8;background:#f7f7f7"></div>
<div class="a dro" style="top:123.0px;height:32.0px"><div class="a drot">Z   -0.010</div><div class="a" style="left:2px;top:27.5px;width:162px;height:1px;background:#8ea0cc"></div><div class="a" style="left:24.0px;top:25.5px;width:1.5px;height:4px;background:#fff"></div></div>
<div class="a btnf" style="left:583.5px;top:159.3px;width:35px;height:34.6px"></div>
<div class="a btni" style="left:585.8px;top:161.8px;width:30.4px;height:29.6px"></div>
<svg class="a" style="left:585px;top:161.6px" width="32" height="30" viewBox="0 0 32 30">
<circle cx="15.6" cy="15" r="10.3" fill="none" stroke="#f2f2f2" stroke-width="1.1"/>
<line x1="1.8" y1="15" x2="29.2" y2="15" stroke="#f2f2f2" stroke-width="1.1"/>
<line x1="15.6" y1="1.6" x2="15.6" y2="28.4" stroke="#f2f2f2" stroke-width="1.1"/>
<text x="20.5" y="22.8" font-family="Liberation Sans" font-size="9" fill="#f0f0f0" text-anchor="middle">C</text>
</svg>
<div class="a" style="left:621px;top:157.8px;width:173px;height:37.1px;border:1px solid #c4c4c4;border-top-color:#a8a8a8;background:#f7f7f7"></div>
<div class="a dro" style="top:160.5px;height:31.9px"><div class="a drot">C -103.500</div></div>
<div class="a" style="left:624.4px;top:202.5px;width:43px;height:10.5px;border:1px solid #8e9296;border-bottom:none;background:linear-gradient(#f2f2f2,#d9d9d9);font-size:6.8px;line-height:10px;text-align:center;color:#111">Feed Speed</div>
<div class="a" style="left:667.4px;top:202.5px;width:36.1px;height:10.5px;border:1px solid #8e9296;border-bottom:none;background:linear-gradient(#f2f2f2,#d9d9d9);font-size:6.8px;line-height:10px;text-align:center;color:#111">G/M Code</div>
<div class="a" style="left:703.5px;top:200.5px;width:27.5px;height:12.5px;border:1px solid #8e9296;border-bottom:none;background:#fff;font-size:6.8px;line-height:11px;text-align:center;color:#111">Time</div>
<div class="a" style="left:621px;top:212.8px;width:173px;height:1px;background:#b0b0b0"></div>
<div class="a btnf" style="left:583.5px;top:214.4px;width:35px;height:35.3px"></div>
<div class="a btni" style="left:585.8px;top:216.8px;width:30.4px;height:30.5px"></div>
<svg class="a" style="left:585.8px;top:216.8px" width="31" height="31" viewBox="0 0 31 31">
<path d="M15.2,15.2 L15.2,4.8 A10.4,10.4 0 0 0 4.8,15.2 Z" fill="#f4f4f4"/>
<path d="M15.2,15.2 L25.6,15.2 A10.4,10.4 0 0 1 15.2,25.6 Z" fill="#f4f4f4"/>
<circle cx="15.2" cy="15.2" r="10.4" fill="none" stroke="#f4f4f4" stroke-width="1.2"/>
<line x1="1.5" y1="15.2" x2="29" y2="15.2" stroke="#f4f4f4" stroke-width="1.2"/>
<line x1="15.2" y1="1.5" x2="15.2" y2="29" stroke="#f4f4f4" stroke-width="1.2"/>
</svg>
<div class="a" style="left:621px;top:213.5px;width:173px;height:37.5px;border:1px solid #c4c4c4;background:#f7f7f7"></div>
<div class="a dro" style="top:216px;height:32.3px;border-color:#0d1a3a #8090b0 #9aa6c0 #0d1a3a"><div class="a" style="left:-0.3px;top:1.6px;font-weight:bold;font-size:13.6px;line-height:14px;color:#fff">ACTUAL</div><div class="a" style="left:-0.3px;top:17.2px;font-weight:bold;font-size:13.6px;line-height:14px;color:#fff">TOTAL</div><div class="a" style="left:74.2px;top:1px;font-weight:bold;font-size:14.1px;line-height:14px;color:#fff;white-space:nowrap"><span style="display:inline-block;width:9.62px;text-align:center">0</span><span style="display:inline-block;width:9.62px;text-align:center">0</span><span style="display:inline-block;width:9.62px;text-align:center">:</span><span style="display:inline-block;width:9.62px;text-align:center">0</span><span style="display:inline-block;width:9.62px;text-align:center">8</span><span style="display:inline-block;width:9.62px;text-align:center">:</span><span style="display:inline-block;width:9.62px;text-align:center">3</span><span style="display:inline-block;width:9.62px;text-align:center">0</span></div><div class="a" style="left:74.2px;top:16.8px;font-weight:bold;font-size:14.1px;line-height:14px;color:#fff;white-space:nowrap"><span style="display:inline-block;width:9.62px;text-align:center">0</span><span style="display:inline-block;width:9.62px;text-align:center">0</span><span style="display:inline-block;width:9.62px;text-align:center">:</span><span style="display:inline-block;width:9.62px;text-align:center">5</span><span style="display:inline-block;width:9.62px;text-align:center">3</span><span style="display:inline-block;width:9.62px;text-align:center">:</span><span style="display:inline-block;width:9.62px;text-align:center">4</span><span style="display:inline-block;width:9.62px;text-align:center">1</span></div></div>
<div class="a" style="left:583.5px;top:254px;width:209.5px;height:13px;border:1px solid #a8a8a8;border-right-color:#e0e0e0;border-bottom-color:#e0e0e0;background:#f0f0f0"></div>
<div class="a" style="left:587.7px;top:255px;font-size:5.9px;font-weight:bold;line-height:9px;white-space:nowrap;color:#111;letter-spacing:-0.07px">G17 G40 G21 G90 G94 G54 G43 G99 G64P0.1 G97 G50 G0 T3</div>
<div class="a" style="left:583.5px;top:272.8px;width:209.5px;height:5px;border:1px solid #b8b8b8;background:linear-gradient(#e4e4e4,#cfcfcf);border-radius:1px"></div>
<div class="a" style="left:583.5px;top:273.5px;width:3px;height:3.5px;background:#20d030;border-radius:1px"></div>
<div class="a" style="left:583.5px;top:279.5px;width:210px;height:263px;border:1px solid #b4b4b4;border-right:none;background:#fff;overflow:hidden"><div class="a" style="left:38.5px;top:0;width:1px;height:263px;background:#a0a0a0"></div><div class="a" style="left:0;top:236.3px;width:210px;height:8.75px;background:#1de31d"></div><div class="a prog" style="left:1.3px;top:1.40px"><i>0</i><i>0</i><i>0</i><i>0</i><i>4</i><i>5</i><i>9</i></div><div class="a prog" style="left:41.1px;top:1.40px"><i>N</i><i>0</i><i>4</i><i>1</i><i>7</i><i> </i><i>F</i><i class="b">[</i><i>#</i><i>1</i><i class="b">]</i><i> </i><i>G</i><i>1</i><i> </i><i>X</i><i>1</i><i>9</i><i>1</i><i>4</i><i>.</i><i>1</i><i>8</i><i>7</i><i>1</i><i> </i><i>Y</i><i>1</i><i>0</i><i>9</i><i>0</i><i>.</i><i>0</i><i>5</i><i>3</i><i>3</i></div><div class="a prog" style="left:1.3px;top:10.15px"><i>0</i><i>0</i><i>0</i><i>0</i><i>4</i><i>6</i><i>0</i></div><div class="a prog" style="left:41.1px;top:10.15px"><i>N</i><i>0</i><i>4</i><i>1</i><i>8</i><i> </i><i>F</i><i class="b">[</i><i>#</i><i>2</i><i class="b">]</i><i> </i><i>G</i><i>1</i><i> </i><i>Z</i><i>-</i><i>0</i><i>.</i><i>0</i><i>1</i><i>0</i><i>0</i></div><div class="a prog" style="left:1.3px;top:18.90px"><i>0</i><i>0</i><i>0</i><i>0</i><i>4</i><i>6</i><i>1</i></div><div class="a prog" style="left:41.1px;top:18.90px"><i>N</i><i>0</i><i>4</i><i>1</i><i>9</i><i> </i><i>F</i><i class="b">[</i><i>#</i><i>1</i><i class="b">]</i><i> </i><i>G</i><i>2</i><i> </i><i>X</i><i>1</i><i>9</i><i>0</i><i>8</i><i>.</i><i>1</i><i>8</i><i>7</i><i>1</i><i> </i><i>Y</i><i>1</i><i>0</i><i>9</i><i>0</i><i>.</i><i>0</i><i>5</i><i>3</i><i>3</i></div><div class="a prog" style="left:1.3px;top:27.65px"><i>0</i><i>0</i><i>0</i><i>0</i><i>4</i><i>6</i><i>2</i></div><div class="a prog" style="left:41.1px;top:27.65px"><i>N</i><i>0</i><i>4</i><i>2</i><i>0</i><i> </i><i>F</i><i class="b">[</i><i>#</i><i>1</i><i class="b">]</i><i> </i><i>G</i><i>1</i><i> </i><i>X</i><i>1</i><i>9</i><i>0</i><i>8</i><i>.</i><i>1</i><i>8</i><i>7</i><i>1</i><i> </i><i>Y</i><i>1</i><i>2</i><i>9</i><i>0</i><i>.</i><i>0</i><i>5</i><i>3</i><i>3</i></div><div class="a prog" style="left:1.3px;top:36.40px"><i>0</i><i>0</i><i>0</i><i>0</i><i>4</i><i>6</i><i>3</i></div><div class="a prog" style="left:41.1px;top:36.40px"><i>N</i><i>0</i><i>4</i><i>2</i><i>1</i><i> </i><i>F</i><i class="b">[</i><i>#</i><i>1</i><i class="b">]</i><i> </i><i>G</i><i>2</i><i> </i><i>X</i><i>1</i><i>9</i><i>1</i><i>4</i><i>.</i><i>1</i><i>8</i><i>7</i><i>1</i><i> </i><i>Y</i><i>1</i><i>2</i><i>9</i><i>0</i><i>.</i><i>0</i><i>5</i><i>3</i><i>3</i></div><div class="a prog" style="left:1.3px;top:45.15px"><i>0</i><i>0</i><i>0</i><i>0</i><i>4</i><i>6</i><i>4</i></div><div class="a prog" style="left:41.1px;top:45.15px"><i>N</i><i>0</i><i>4</i><i>2</i><i>2</i><i> </i><i>F</i><i class="b">[</i><i>#</i><i>1</i><i class="b">]</i><i> </i><i>G</i><i>1</i><i> </i><i>X</i><i>1</i><i>9</i><i>1</i><i>4</i><i>.</i><i>1</i><i>8</i><i>7</i><i>1</i><i> </i><i>Y</i><i>1</i><i>0</i><i>9</i><i>0</i><i>.</i><i>0</i><i>5</i><i>3</i><i>3</i></div><div class="a prog" style="left:1.3px;top:53.90px"><i>0</i><i>0</i><i>0</i><i>0</i><i>4</i><i>6</i><i>5</i></div><div class="a prog" style="left:41.1px;top:53.90px"><i>N</i><i>0</i><i>4</i><i>2</i><i>3</i><i> </i><i>G</i><i>0</i><i> </i><i>Z</i><i>7</i><i>0</i><i>.</i><i>0</i><i>0</i><i>0</i><i>0</i></div><div class="a prog" style="left:1.3px;top:62.65px"><i>0</i><i>0</i><i>0</i><i>0</i><i>4</i><i>6</i><i>6</i></div><div class="a prog" style="left:41.1px;top:62.65px"></div><div class="a prog" style="left:1.3px;top:71.40px"><i>0</i><i>0</i><i>0</i><i>0</i><i>4</i><i>6</i><i>7</i></div><div class="a prog" style="left:41.1px;top:71.40px"><i>;</i><i>P</i><i>a</i><i>t</i><i>h</i><i> </i><i>s</i><i>t</i><i>a</i><i>r</i><i>t</i><i> </i><i>P</i><i>o</i><i>i</i><i>n</i><i>t</i></div><div class="a prog" style="left:1.3px;top:80.15px"><i>0</i><i>0</i><i>0</i><i>0</i><i>4</i><i>6</i><i>8</i></div><div class="a prog" style="left:41.1px;top:80.15px"><i>N</i><i>0</i><i>4</i><i>2</i><i>4</i><i> </i><i>G</i><i>0</i><i> </i><i>X</i><i>1</i><i>8</i><i>6</i><i>4</i><i>.</i><i>1</i><i>8</i><i>7</i><i>1</i><i> </i><i>Y</i><i>1</i><i>0</i><i>9</i><i>0</i><i>.</i><i>0</i><i>5</i><i>3</i><i>3</i></div><div class="a prog" style="left:1.3px;top:88.90px"><i>0</i><i>0</i><i>0</i><i>0</i><i>4</i><i>6</i><i>9</i></div><div class="a prog" style="left:41.1px;top:88.90px"><i>N</i><i>0</i><i>4</i><i>2</i><i>5</i><i> </i><i>F</i><i class="b">[</i><i>#</i><i>2</i><i class="b">]</i><i> </i><i>G</i><i>1</i><i> </i><i>Z</i><i>7</i><i>.</i><i>8</i><i>0</i><i>0</i><i>0</i></div><div class="a prog" style="left:1.3px;top:97.65px"><i>0</i><i>0</i><i>0</i><i>0</i><i>4</i><i>7</i><i>0</i></div><div class="a prog" style="left:41.1px;top:97.65px"><i>N</i><i>0</i><i>4</i><i>2</i><i>6</i><i> </i><i>F</i><i class="b">[</i><i>#</i><i>1</i><i class="b">]</i><i> </i><i>G</i><i>2</i><i> </i><i>X</i><i>1</i><i>8</i><i>5</i><i>8</i><i>.</i><i>1</i><i>8</i><i>7</i><i>1</i><i> </i><i>Y</i><i>1</i><i>0</i><i>9</i><i>0</i><i>.</i><i>0</i><i>5</i><i>3</i><i>3</i></div><div class="a prog" style="left:1.3px;top:106.40px"><i>0</i><i>0</i><i>0</i><i>0</i><i>4</i><i>7</i><i>1</i></div><div class="a prog" style="left:41.1px;top:106.40px"><i>N</i><i>0</i><i>4</i><i>2</i><i>7</i><i> </i><i>F</i><i class="b">[</i><i>#</i><i>1</i><i class="b">]</i><i> </i><i>G</i><i>1</i><i> </i><i>X</i><i>1</i><i>8</i><i>5</i><i>8</i><i>.</i><i>1</i><i>8</i><i>7</i><i>1</i><i> </i><i>Y</i><i>1</i><i>2</i><i>9</i><i>0</i><i>.</i><i>0</i><i>5</i><i>3</i><i>3</i></div><div class="a prog" style="left:1.3px;top:115.15px"><i>0</i><i>0</i><i>0</i><i>0</i><i>4</i><i>7</i><i>2</i></div><div class="a prog" style="left:41.1px;top:115.15px"><i>N</i><i>0</i><i>4</i><i>2</i><i>8</i><i> </i><i>F</i><i class="b">[</i><i>#</i><i>1</i><i class="b">]</i><i> </i><i>G</i><i>2</i><i> </i><i>X</i><i>1</i><i>8</i><i>6</i><i>4</i><i>.</i><i>1</i><i>8</i><i>7</i><i>1</i><i> </i><i>Y</i><i>1</i><i>2</i><i>9</i><i>0</i><i>.</i><i>0</i><i>5</i><i>3</i><i>3</i></div><div class="a prog" style="left:1.3px;top:123.90px"><i>0</i><i>0</i><i>0</i><i>0</i><i>4</i><i>7</i><i>3</i></div><div class="a prog" style="left:41.1px;top:123.90px"><i>N</i><i>0</i><i>4</i><i>2</i><i>9</i><i> </i><i>F</i><i class="b">[</i><i>#</i><i>1</i><i class="b">]</i><i> </i><i>G</i><i>1</i><i> </i><i>X</i><i>1</i><i>8</i><i>6</i><i>4</i><i>.</i><i>1</i><i>8</i><i>7</i><i>1</i><i> </i><i>Y</i><i>1</i><i>0</i><i>9</i><i>0</i><i>.</i><i>0</i><i>5</i><i>3</i><i>3</i></div><div class="a prog" style="left:1.3px;top:132.65px"><i>0</i><i>0</i><i>0</i><i>0</i><i>4</i><i>7</i><i>4</i></div><div class="a prog" style="left:41.1px;top:132.65px"><i>N</i><i>0</i><i>4</i><i>3</i><i>0</i><i> </i><i>F</i><i class="b">[</i><i>#</i><i>2</i><i class="b">]</i><i> </i><i>G</i><i>1</i><i> </i><i>Z</i><i>5</i><i>.</i><i>1</i><i>0</i><i>0</i><i>0</i></div><div class="a prog" style="left:1.3px;top:141.40px"><i>0</i><i>0</i><i>0</i><i>0</i><i>4</i><i>7</i><i>5</i></div><div class="a prog" style="left:41.1px;top:141.40px"><i>N</i><i>0</i><i>4</i><i>3</i><i>1</i><i> </i><i>F</i><i class="b">[</i><i>#</i><i>1</i><i class="b">]</i><i> </i><i>G</i><i>2</i><i> </i><i>X</i><i>1</i><i>8</i><i>5</i><i>8</i><i>.</i><i>1</i><i>8</i><i>7</i><i>1</i><i> </i><i>Y</i><i>1</i><i>0</i><i>9</i><i>0</i><i>.</i><i>0</i><i>5</i><i>3</i><i>3</i></div><div class="a prog" style="left:1.3px;top:150.15px"><i>0</i><i>0</i><i>0</i><i>0</i><i>4</i><i>7</i><i>6</i></div><div class="a prog" style="left:41.1px;top:150.15px"><i>N</i><i>0</i><i>4</i><i>3</i><i>2</i><i> </i><i>F</i><i class="b">[</i><i>#</i><i>1</i><i class="b">]</i><i> </i><i>G</i><i>1</i><i> </i><i>X</i><i>1</i><i>8</i><i>5</i><i>8</i><i>.</i><i>1</i><i>8</i><i>7</i><i>1</i><i> </i><i>Y</i><i>1</i><i>2</i><i>9</i><i>0</i><i>.</i><i>0</i><i>5</i><i>3</i><i>3</i></div><div class="a prog" style="left:1.3px;top:158.90px"><i>0</i><i>0</i><i>0</i><i>0</i><i>4</i><i>7</i><i>7</i></div><div class="a prog" style="left:41.1px;top:158.90px"><i>N</i><i>0</i><i>4</i><i>3</i><i>3</i><i> </i><i>F</i><i class="b">[</i><i>#</i><i>1</i><i class="b">]</i><i> </i><i>G</i><i>2</i><i> </i><i>X</i><i>1</i><i>8</i><i>6</i><i>4</i><i>.</i><i>1</i><i>8</i><i>7</i><i>1</i><i> </i><i>Y</i><i>1</i><i>2</i><i>9</i><i>0</i><i>.</i><i>0</i><i>5</i><i>3</i><i>3</i></div><div class="a prog" style="left:1.3px;top:167.65px"><i>0</i><i>0</i><i>0</i><i>0</i><i>4</i><i>7</i><i>8</i></div><div class="a prog" style="left:41.1px;top:167.65px"><i>N</i><i>0</i><i>4</i><i>3</i><i>4</i><i> </i><i>F</i><i class="b">[</i><i>#</i><i>1</i><i class="b">]</i><i> </i><i>G</i><i>1</i><i> </i><i>X</i><i>1</i><i>8</i><i>6</i><i>4</i><i>.</i><i>1</i><i>8</i><i>7</i><i>1</i><i> </i><i>Y</i><i>1</i><i>0</i><i>9</i><i>0</i><i>.</i><i>0</i><i>5</i><i>3</i><i>3</i></div><div class="a prog" style="left:1.3px;top:176.40px"><i>0</i><i>0</i><i>0</i><i>0</i><i>4</i><i>7</i><i>9</i></div><div class="a prog" style="left:41.1px;top:176.40px"><i>N</i><i>0</i><i>4</i><i>3</i><i>5</i><i> </i><i>F</i><i class="b">[</i><i>#</i><i>2</i><i class="b">]</i><i> </i><i>G</i><i>1</i><i> </i><i>Z</i><i>2</i><i>.</i><i>4</i><i>0</i><i>0</i><i>0</i></div><div class="a prog" style="left:1.3px;top:185.15px"><i>0</i><i>0</i><i>0</i><i>0</i><i>4</i><i>8</i><i>0</i></div><div class="a prog" style="left:41.1px;top:185.15px"><i>N</i><i>0</i><i>4</i><i>3</i><i>6</i><i> </i><i>F</i><i class="b">[</i><i>#</i><i>1</i><i class="b">]</i><i> </i><i>G</i><i>2</i><i> </i><i>X</i><i>1</i><i>8</i><i>5</i><i>8</i><i>.</i><i>1</i><i>8</i><i>7</i><i>1</i><i> </i><i>Y</i><i>1</i><i>0</i><i>9</i><i>0</i><i>.</i><i>0</i><i>5</i><i>3</i><i>3</i></div><div class="a prog" style="left:1.3px;top:193.90px"><i>0</i><i>0</i><i>0</i><i>0</i><i>4</i><i>8</i><i>1</i></div><div class="a prog" style="left:41.1px;top:193.90px"><i>N</i><i>0</i><i>4</i><i>3</i><i>7</i><i> </i><i>F</i><i class="b">[</i><i>#</i><i>1</i><i class="b">]</i><i> </i><i>G</i><i>1</i><i> </i><i>X</i><i>1</i><i>8</i><i>5</i><i>8</i><i>.</i><i>1</i><i>8</i><i>7</i><i>1</i><i> </i><i>Y</i><i>1</i><i>2</i><i>9</i><i>0</i><i>.</i><i>0</i><i>5</i><i>3</i><i>3</i></div><div class="a prog" style="left:1.3px;top:202.65px"><i>0</i><i>0</i><i>0</i><i>0</i><i>4</i><i>8</i><i>2</i></div><div class="a prog" style="left:41.1px;top:202.65px"><i>N</i><i>0</i><i>4</i><i>3</i><i>8</i><i> </i><i>F</i><i class="b">[</i><i>#</i><i>1</i><i class="b">]</i><i> </i><i>G</i><i>2</i><i> </i><i>X</i><i>1</i><i>8</i><i>6</i><i>4</i><i>.</i><i>1</i><i>8</i><i>7</i><i>1</i><i> </i><i>Y</i><i>1</i><i>2</i><i>9</i><i>0</i><i>.</i><i>0</i><i>5</i><i>3</i><i>3</i></div><div class="a prog" style="left:1.3px;top:211.40px"><i>0</i><i>0</i><i>0</i><i>0</i><i>4</i><i>8</i><i>3</i></div><div class="a prog" style="left:41.1px;top:211.40px"><i>N</i><i>0</i><i>4</i><i>3</i><i>9</i><i> </i><i>F</i><i class="b">[</i><i>#</i><i>1</i><i class="b">]</i><i> </i><i>G</i><i>1</i><i> </i><i>X</i><i>1</i><i>8</i><i>6</i><i>4</i><i>.</i><i>1</i><i>8</i><i>7</i><i>1</i><i> </i><i>Y</i><i>1</i><i>0</i><i>9</i><i>0</i><i>.</i><i>0</i><i>5</i><i>3</i><i>3</i></div><div class="a prog" style="left:1.3px;top:220.15px"><i>0</i><i>0</i><i>0</i><i>0</i><i>4</i><i>8</i><i>4</i></div><div class="a prog" style="left:41.1px;top:220.15px"><i>N</i><i>0</i><i>4</i><i>4</i><i>0</i><i> </i><i>F</i><i class="b">[</i><i>#</i><i>2</i><i class="b">]</i><i> </i><i>G</i><i>1</i><i> </i><i>Z</i><i>-</i><i>0</i><i>.</i><i>0</i><i>1</i><i>0</i><i>0</i></div><div class="a prog" style="left:1.3px;top:228.90px"><i>0</i><i>0</i><i>0</i><i>0</i><i>4</i><i>8</i><i>5</i></div><div class="a prog" style="left:41.1px;top:228.90px"><i>N</i><i>0</i><i>4</i><i>4</i><i>1</i><i> </i><i>F</i><i class="b">[</i><i>#</i><i>1</i><i class="b">]</i><i> </i><i>G</i><i>2</i><i> </i><i>X</i><i>1</i><i>8</i><i>5</i><i>8</i><i>.</i><i>1</i><i>8</i><i>7</i><i>1</i><i> </i><i>Y</i><i>1</i><i>0</i><i>9</i><i>0</i><i>.</i><i>0</i><i>5</i><i>3</i><i>3</i></div><div class="a prog" style="left:1.3px;top:237.65px"><i>0</i><i>0</i><i>0</i><i>0</i><i>4</i><i>8</i><i>6</i></div><div class="a prog" style="left:41.1px;top:237.65px"><i>N</i><i>0</i><i>4</i><i>4</i><i>2</i><i> </i><i>F</i><i class="b">[</i><i>#</i><i>1</i><i class="b">]</i><i> </i><i>G</i><i>1</i><i> </i><i>X</i><i>1</i><i>8</i><i>5</i><i>8</i><i>.</i><i>1</i><i>8</i><i>7</i><i>1</i><i> </i><i>Y</i><i>1</i><i>2</i><i>9</i><i>0</i><i>.</i><i>0</i><i>5</i><i>3</i><i>3</i></div><div class="a prog" style="left:1.3px;top:246.40px"><i>0</i><i>0</i><i>0</i><i>0</i><i>4</i><i>8</i><i>7</i></div><div class="a prog" style="left:41.1px;top:246.40px"><i>N</i><i>0</i><i>4</i><i>4</i><i>3</i><i> </i><i>F</i><i class="b">[</i><i>#</i><i>1</i><i class="b">]</i><i> </i><i>G</i><i>2</i><i> </i><i>X</i><i>1</i><i>8</i><i>6</i><i>4</i><i>.</i><i>1</i><i>8</i><i>7</i><i>1</i><i> </i><i>Y</i><i>1</i><i>2</i><i>9</i><i>0</i><i>.</i><i>0</i><i>5</i><i>3</i><i>3</i></div></div>
<div class="a" style="left:584px;top:542.6px;width:41.5px;height:9px;border:1px solid #6e6e6e;background:linear-gradient(#dadada,#c6c6c6);font-family:'Liberation Mono',monospace;font-weight:bold;font-size:7px;line-height:7px;text-align:center;color:#222">&lt;&lt;</div>
<div class="a" style="left:625.5px;top:542.6px;width:41.1px;height:9px;border:1px solid #6e6e6e;background:linear-gradient(#dadada,#c6c6c6);font-family:'Liberation Mono',monospace;font-weight:bold;font-size:7px;line-height:7px;text-align:center;color:#222">&lt;</div>
<div class="a" style="left:666.6px;top:542.6px;width:44.1px;height:9px;border:1px solid #6e6e6e;background:linear-gradient(#c4c4c4,#b4b4b4);font-family:'Liberation Mono',monospace;font-weight:bold;font-size:7px;line-height:7px;text-align:center;color:#222">3032</div>
<div class="a" style="left:710.7px;top:542.6px;width:40.9px;height:9px;border:1px solid #6e6e6e;background:linear-gradient(#dadada,#c6c6c6);font-family:'Liberation Mono',monospace;font-weight:bold;font-size:7px;line-height:7px;text-align:center;color:#222">&gt;</div>
<div class="a" style="left:751.6px;top:542.6px;width:42.0px;height:9px;border:1px solid #6e6e6e;background:linear-gradient(#dadada,#c6c6c6);font-family:'Liberation Mono',monospace;font-weight:bold;font-size:7px;line-height:7px;text-align:center;color:#222">&gt;&gt;</div>
</div>

<!-- BOTTOM TOOLBAR -->
<div id="bottom"><div class="a" style="left:0;top:554.5px;width:800px;height:1px;background:#c8c8c8"></div>
<div class="a" style="left:7.6px;top:564px;width:35.8px;height:35.4px;border:1px solid #c9c9c9;background:#f8f8f8;border-radius:1.5px"></div>
<div class="a" style="left:10.6px;top:566.2px;width:29.8px;height:29.8px;background:linear-gradient(170deg,#5c5c5c,#3e3e3e 45%,#3a3a3a);border-radius:2.5px"></div>
<svg class="a" style="left:10.6px;top:566.2px" width="30" height="30" viewBox="0 0 30 30"><rect x="1.5" y="8.3" width="27" height="1.1" fill="#f4f4f4"/><rect x="1.5" y="20.6" width="27" height="1.1" fill="#f4f4f4"/>
<text x="15" y="17.9" font-family="Liberation Sans" font-weight="bold" font-size="8" fill="#f4f4f4" text-anchor="middle" textLength="26.5" lengthAdjust="spacingAndGlyphs">RESET</text></svg>
<div class="a fl" style="left:10.5px">F1</div>
<div class="a" style="left:45px;top:564px;width:35.8px;height:35.4px;border:1px solid #8dc8ec;background:#e6f3fb;border-radius:1.5px"></div>
<div class="a" style="left:48px;top:566.2px;width:29.8px;height:29.8px;background:linear-gradient(170deg,#5c5c5c,#3e3e3e 45%,#3a3a3a);border-radius:2.5px"></div>
<svg class="a" style="left:48px;top:566.2px" width="30" height="30" viewBox="0 0 30 30"><polygon points="19.5,2.5 27,10 19.5,17.5 12,10" fill="none" stroke="#f0f0f0" stroke-width="1.1"/>
<rect x="5" y="9.2" width="10" height="2" fill="#f4f4f4"/><polygon points="14,6.8 18,10.2 14,13.6" fill="#f4f4f4"/>
<text x="15.5" y="26.5" font-family="Liberation Sans" font-size="7" fill="#f4f4f4" text-anchor="middle">LOAD</text></svg>
<div class="a fl" style="left:47.9px">F2</div>
<div class="a" style="left:83.2px;top:564px;width:35.8px;height:35.4px;border:1px solid #c9c9c9;background:#f8f8f8;border-radius:1.5px"></div>
<div class="a" style="left:86.2px;top:566.2px;width:29.8px;height:29.8px;background:linear-gradient(170deg,#5c5c5c,#3e3e3e 45%,#3a3a3a);border-radius:2.5px"></div>
<svg class="a" style="left:86.2px;top:566.2px" width="30" height="30" viewBox="0 0 30 30"><path d="M10.5,11.5 A5,5 0 0 1 19.5,9" stroke="#f4f4f4" stroke-width="2.2" fill="none"/><polygon points="17,5.5 22,9.5 16.5,11.5" fill="#f4f4f4"/>
<path d="M19.5,12.5 A5,5 0 0 1 10.5,15" stroke="#f4f4f4" stroke-width="2.2" fill="none"/><polygon points="13,18.5 8,14.5 13.5,12.5" fill="#f4f4f4"/>
<text x="15" y="26.5" font-family="Liberation Sans" font-size="6.4" fill="#e8e8e8" text-anchor="middle" textLength="26" lengthAdjust="spacingAndGlyphs">REDRAW</text></svg>
<div class="a fl" style="left:86.10000000000001px">F3</div>
<div class="a" style="left:120.7px;top:564px;width:35.8px;height:35.4px;border:1px solid #c9c9c9;background:#f8f8f8;border-radius:1.5px"></div>
<div class="a" style="left:123.7px;top:566.2px;width:29.8px;height:29.8px;background:linear-gradient(160deg,#f03a3a,#d80f0f 55%,#c80808);border-radius:2.5px"></div>
<svg class="a" style="left:123.7px;top:566.2px" width="30" height="30" viewBox="0 0 30 30"><circle cx="15" cy="11" r="8" fill="none" stroke="#fff" stroke-width="1.2"/><polygon points="9.5,7.5 20.5,7.5 15,16.5" fill="none" stroke="#fff" stroke-width="1.2"/>
<text x="15" y="26.5" font-family="Liberation Sans" font-weight="bold" font-size="6.8" fill="#fff" text-anchor="middle">STOP</text></svg>
<div class="a fl" style="left:123.60000000000001px">F4</div>
<div class="a" style="left:171.4px;top:564px;width:35.8px;height:35.4px;border:1px solid #c9c9c9;background:#f8f8f8;border-radius:1.5px"></div>
<div class="a" style="left:174.4px;top:566.2px;width:29.8px;height:29.8px;background:linear-gradient(170deg,#5c5c5c,#3e3e3e 45%,#3a3a3a);border-radius:2.5px"></div>
<svg class="a" style="left:174.4px;top:566.2px" width="30" height="30" viewBox="0 0 30 30"><rect x="6" y="6.9" width="2.5" height="16.2" fill="#f4f4f4"/><polygon points="9.7,15 23.2,6 23.2,24" fill="#f4f4f4"/></svg>
<div class="a fl" style="left:174.3px">F5</div>
<div class="a" style="left:209.1px;top:564px;width:35.8px;height:35.4px;border:1px solid #c9c9c9;background:#f8f8f8;border-radius:1.5px"></div>
<div class="a" style="left:212.1px;top:566.2px;width:29.8px;height:29.8px;background:linear-gradient(170deg,#5c5c5c,#3e3e3e 45%,#3a3a3a);border-radius:2.5px"></div>
<svg class="a" style="left:212.1px;top:566.2px" width="30" height="30" viewBox="0 0 30 30"><polygon points="15.5,3 23,10.5 15.5,18 8,10.5" fill="none" stroke="#f0f0f0" stroke-width="1.1"/>
<polygon points="15.5,6.5 19,10 14,15 12,13" fill="none" stroke="#f0f0f0" stroke-width="0.9"/>
<text x="15" y="26.5" font-family="Liberation Sans" font-size="7" fill="#f4f4f4" text-anchor="middle">EDIT</text></svg>
<div class="a fl" style="left:212.0px">F6</div>
<div class="a" style="left:246.2px;top:564px;width:35.8px;height:35.4px;border:1px solid #c9c9c9;background:#f8f8f8;border-radius:1.5px"></div>
<div class="a" style="left:249.2px;top:566.2px;width:29.8px;height:29.8px;background:linear-gradient(170deg,#5c5c5c,#3e3e3e 45%,#3a3a3a);border-radius:2.5px"></div>
<svg class="a" style="left:249.2px;top:566.2px" width="30" height="30" viewBox="0 0 30 30"><rect x="6.6" y="3.2" width="13.5" height="14.7" fill="#f4f4f4"/><path d="M8.5,9h6.7M8.5,11.1h6.7M8.5,13.3h6.7M8.5,15.4h6.7" stroke="#333" stroke-width="0.9"/>
<path d="M23.8,2.5V10.5Q23.8,13.6 20.5,13.6H16.5" stroke="#2a2a2a" stroke-width="4" fill="none"/><path d="M23.8,2.5V10.5Q23.8,13.6 20.5,13.6H16.5" stroke="#f4f4f4" stroke-width="2" fill="none"/>
<polygon points="13.5,13.6 17.5,10.3 17.5,16.9" fill="#f4f4f4" stroke="#2a2a2a" stroke-width="0.7"/>
<text x="15" y="26.5" font-family="Liberation Sans" font-size="6.8" fill="#f4f4f4" text-anchor="middle">GOTO</text></svg>
<div class="a fl" style="left:249.1px">F7</div>
<div class="a" style="left:334.3px;top:564px;width:35.8px;height:35.4px;border:1px solid #c9c9c9;background:#f8f8f8;border-radius:1.5px"></div>
<div class="a" style="left:337.3px;top:566.2px;width:29.8px;height:29.8px;background:linear-gradient(170deg,#5c5c5c,#3e3e3e 45%,#3a3a3a);border-radius:2.5px"></div>
<svg class="a" style="left:337.3px;top:566.2px" width="30" height="30" viewBox="0 0 30 30"><text x="6.3" y="16.2" font-family="Liberation Sans" font-weight="bold" font-size="14.5" fill="#f6f6f6">F-</text><polygon points="8.5,20 22,27 8.5,27" fill="#f6f6f6"/></svg>
<div class="a fl" style="left:337.2px">F9</div>
<div class="a" style="left:371.4px;top:564px;width:35.8px;height:35.4px;border:1px solid #c9c9c9;background:#f8f8f8;border-radius:1.5px"></div>
<div class="a" style="left:374.4px;top:566.2px;width:29.8px;height:29.8px;background:linear-gradient(170deg,#5c5c5c,#3e3e3e 45%,#3a3a3a);border-radius:2.5px"></div>
<svg class="a" style="left:374.4px;top:566.2px" width="30" height="30" viewBox="0 0 30 30"><text x="5.2" y="16.2" font-family="Liberation Sans" font-weight="bold" font-size="14.5" fill="#f6f6f6">F+</text><polygon points="9,27 23,20 23,27" fill="#f6f6f6"/></svg>
<div class="a fl" style="left:374.29999999999995px">F10</div>
<div class="a" style="left:408.5px;top:564px;width:35.8px;height:35.4px;border:1px solid #c9c9c9;background:#f8f8f8;border-radius:1.5px"></div>
<div class="a" style="left:411.5px;top:566.2px;width:29.8px;height:29.8px;background:linear-gradient(170deg,#5c5c5c,#3e3e3e 45%,#3a3a3a);border-radius:2.5px"></div>
<svg class="a" style="left:411.5px;top:566.2px" width="30" height="30" viewBox="0 0 30 30"><text x="7" y="8.3" font-family="Liberation Sans" font-size="8" fill="#f0f0f0" textLength="10.3" lengthAdjust="spacingAndGlyphs">Ny</text><text x="19.3" y="22.7" font-family="Liberation Sans" font-size="8" fill="#f0f0f0" textLength="9.4" lengthAdjust="spacingAndGlyphs">Nx</text>
<path d="M4.7,5V25H26.8" stroke="#f0f0f0" stroke-width="0.9" fill="none"/>
<rect x="7.2" y="13.2" width="4" height="4" fill="none" stroke="#f0f0f0" stroke-width="0.9"/><rect x="13.3" y="13.2" width="4" height="4" fill="none" stroke="#f0f0f0" stroke-width="0.9"/>
<rect x="7.2" y="19" width="4" height="4" fill="none" stroke="#f0f0f0" stroke-width="0.9"/><rect x="13.3" y="19" width="4" height="4" fill="none" stroke="#f0f0f0" stroke-width="0.9"/></svg>
<div class="a fl" style="left:411.4px">F11</div>
<div class="a" style="left:446.2px;top:564px;width:35.8px;height:35.4px;border:1px solid #c9c9c9;background:#f8f8f8;border-radius:1.5px"></div>
<div class="a" style="left:449.2px;top:566.2px;width:29.8px;height:29.8px;background:linear-gradient(170deg,#5c5c5c,#3e3e3e 45%,#3a3a3a);border-radius:2.5px"></div>
<svg class="a" style="left:449.2px;top:566.2px" width="30" height="30" viewBox="0 0 30 30"><path d="M12.5,11.8 H17.2 a4.3,4.3 0 0 1 0,8.6 H11.5" stroke="#f6f6f6" stroke-width="2.5" fill="none"/><polygon points="8.5,11.8 13.8,6.8 13.8,16.8" fill="#f6f6f6"/></svg>
<div class="a fl" style="left:449.09999999999997px">F12</div>
<div class="a" style="left:487.5px;top:566.5px;font-weight:bold;font-size:8px;line-height:10px;color:#111">AUTO</div>
<div class="a" style="left:487px;top:589.5px;font-size:7.3px;line-height:10px;color:#111;white-space:nowrap">Arc F %</div>
<div class="a" style="left:490.5px;top:600px;font-size:7.3px;line-height:10px;color:#111">100</div>
<div class="a" style="left:509.5px;top:599.5px;width:8px;height:12.5px;border:1px solid #b0b0b0;background:#f4f4f4"></div>
<div class="a" style="left:509.5px;top:605.5px;width:8px;height:1px;background:#b0b0b0"></div>
<svg class="a" style="left:510px;top:600px" width="8" height="12"><polygon points="2,4 4,2 6,4" fill="#555"/><polygon points="2,8 4,10 6,8" fill="#555"/></svg>
<div class="a cb" style="left:524.3px;top:592.75px"></div><div class="a cbl" style="left:533.8px;top:591.75px;line-height:10px">G28</div>
<div class="a cb" style="left:524.3px;top:604.25px"></div><div class="a cbl" style="left:533.8px;top:603.25px;line-height:10px">G30</div>
<div class="a cb" style="left:567.5px;top:559.2px"></div><div class="a cbl" style="left:577.0px;top:558.2px;line-height:10px">Single</div>
<div class="a cb" style="left:567.5px;top:569.75px"></div><div class="a cbl" style="left:577.0px;top:568.75px;line-height:10px">BlockDel</div>
<div class="a cb" style="left:567.5px;top:581.5px"></div><div class="a cbl" style="left:577.0px;top:580.5px;line-height:10px">Sim</div>
<div class="a cb" style="left:567.5px;top:592.75px"></div><div class="a cbl" style="left:577.0px;top:591.75px;line-height:10px">Fast RT Graph</div>
<div class="a cb" style="left:567.5px;top:604.25px"></div><div class="a cbl" style="left:577.0px;top:603.25px;line-height:10px">Fast Rendering</div>
</div>

<!-- TASKBAR -->
<div class="a" style="left:0;top:615.5px;width:800px;height:4.5px;background:linear-gradient(#2b4a8c,#1a3070)"></div>
<div class="a" style="left:9px;top:616px;width:16px;height:8px;border-radius:8px 8px 0 0;background:linear-gradient(#c8d8ea,#7090b8)"></div>
<div class="a" style="left:37.5px;top:616px;width:36px;height:4px;background:linear-gradient(#f4e8a8,#e0cc78)"></div>
<div class="a" style="left:115px;top:616px;width:35px;height:4px;background:linear-gradient(#b8c8e0,#8ca0c4)"></div>
</body></html>
